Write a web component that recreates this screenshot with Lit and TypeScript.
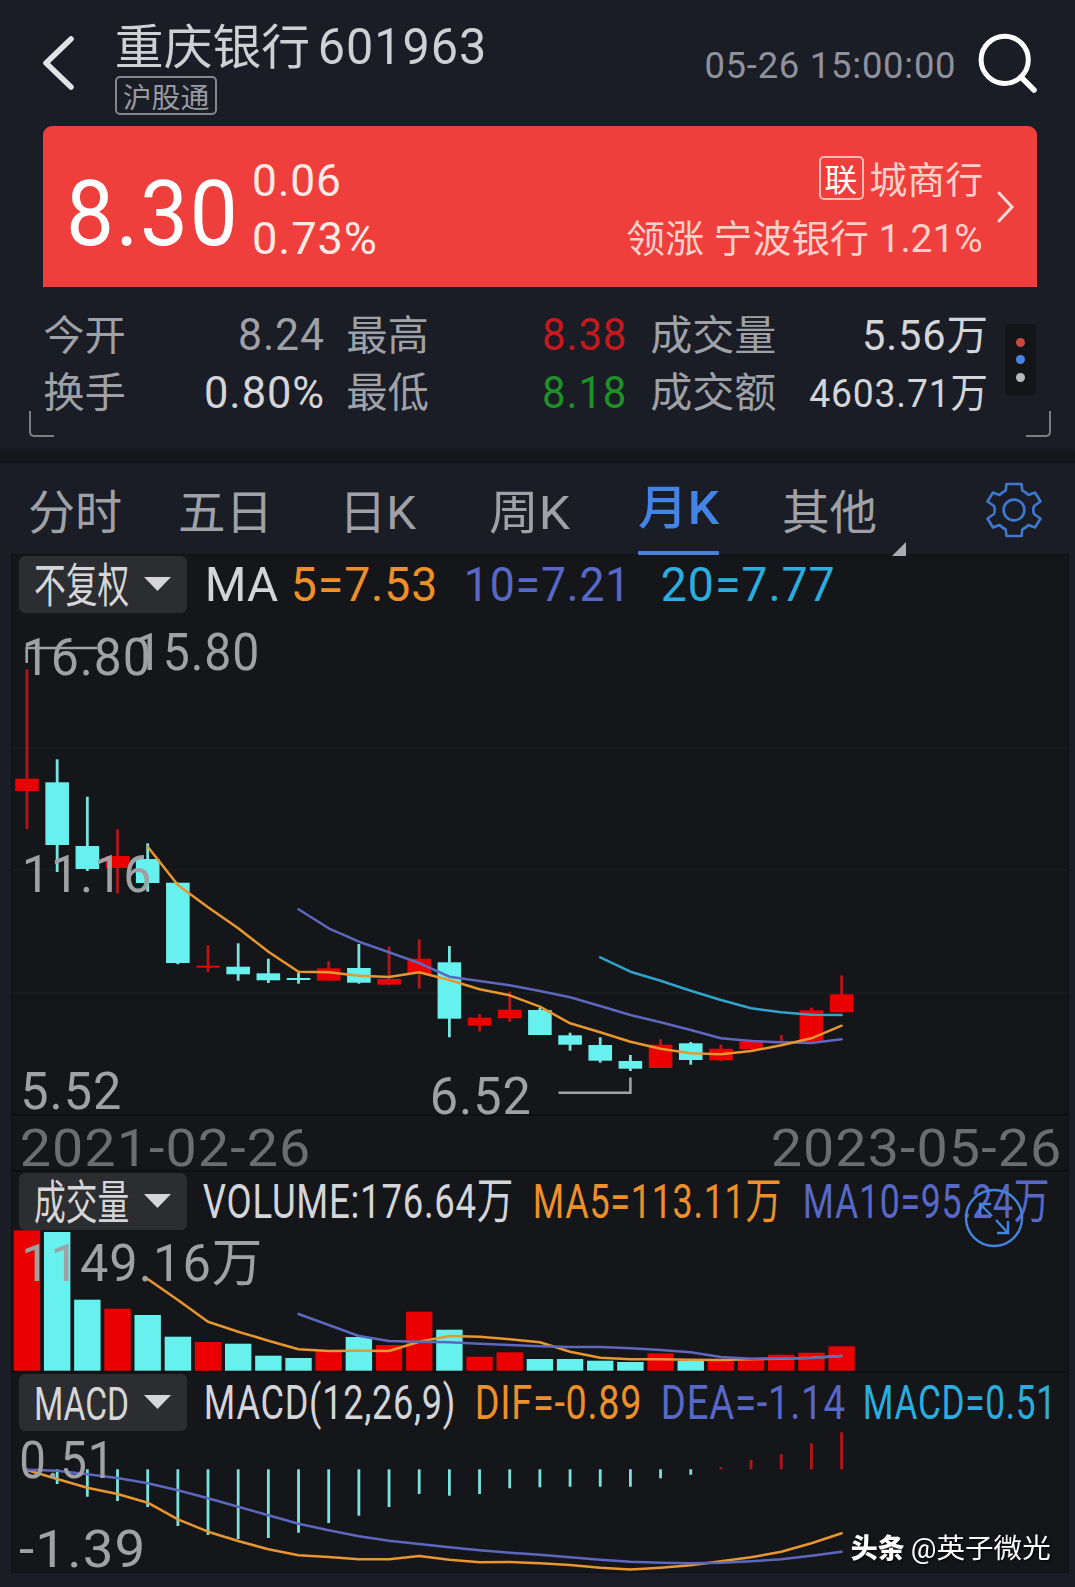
import { LitElement, html, svg, css } from "lit";
import { customElement, property } from "lit/decorators.js";

/** Extra tracking for strings that open with figures or Latin letters. */
const tracking = (text: string, size: number) => (/^[-0-9A-Z].*[0-9]/.test(text) ? size * 0.02 : 0);

/** Text squeezed to an exact width; the box is as tall as the capitals. */
@customElement("fit-text")
class FitText extends LitElement {
  @property() text = "";
  @property({ type: Number }) w = 100;
  @property({ type: Number }) size = 40;
  static styles = css`
    :host { display: block; flex: none; }
    svg { display: block; overflow: visible; }
    text { fill: currentColor; white-space: pre; }
  `;
  render() {
    const h = this.size * 0.727;
    const pad = this.size * 0.045;
    const ls = tracking(this.text, this.size);
    return html`<svg width=${this.w} height=${h}>
      <text x=${-pad} y=${h} font-size=${this.size} letter-spacing=${ls} textLength=${this.w + pad * 2 + ls}
        lengthAdjust="spacingAndGlyphs">${this.text}</text></svg>`;
  }
}

const fit = (text: string, w: number, size: number, cls = "") =>
  html`<fit-text class=${cls} .text=${text} .w=${w} .size=${size}></fit-text>`;

const STEP = 30.17;
const cx = (i: number) => 27 + i * STEP;

type Candle = [string, number, number, number, number];
const candles: Candle[] = [
  ["r", 669.3, 778.7, 791, 829], ["c", 759.3, 782.3, 845, 872], ["c", 796.7, 846, 869, 871],
  ["r", 829.3, 856, 868, 893.3], ["c", 843.3, 859, 883, 891.7], ["c", 882.7, 882.7, 963, 964.3],
  ["r", 945.3, 965.7, 967.7, 972.3], ["c", 943.3, 966.7, 974.3, 980.7], ["c", 958.7, 973.3, 980.3, 983],
  ["c", 972.7, 978, 980, 983.7], ["r", 961.3, 968.3, 980.7, 980.7], ["c", 944, 968, 982.7, 983.7],
  ["r", 946.7, 979, 984.7, 985], ["r", 939.3, 958.7, 974, 988.7], ["c", 946, 962.3, 1018.7, 1037.3],
  ["r", 1014, 1017.7, 1025.7, 1031.7], ["r", 991.7, 1009.7, 1018.3, 1022], ["c", 1007.7, 1010, 1035, 1035],
  ["c", 1032.7, 1035.3, 1044.7, 1050.7], ["c", 1037.3, 1045, 1060.7, 1062.7], ["c", 1055, 1061, 1068.7, 1071],
  ["r", 1039.3, 1044.7, 1068, 1068], ["c", 1042, 1043.3, 1060, 1064.7], ["r", 1044.7, 1048.7, 1060.3, 1061],
  ["r", 1039.5, 1041.3, 1049.3, 1049.3], ["r", 1035, 1041.3, 1043.3, 1043.3],
  ["r", 1007.7, 1010.3, 1042.7, 1042.7], ["r", 975.3, 994.3, 1012.3, 1012.3],
];
const ma5 = [846.7, 885, 907.3, 928.3, 951.7, 971.7, 972.3, 975.7, 977, 972.3, 980, 989.3, 995.3, 1006.7, 1023.3, 1032.3, 1041.7, 1048.7, 1053.3, 1054.3, 1051, 1045.3, 1038.3, 1025.7];
const ma10 = [909.3, 928.3, 941.7, 952.3, 963, 976.7, 981, 985.3, 991, 997.3, 1006, 1015, 1022.3, 1030, 1038.3, 1041, 1042.3, 1043, 1039.3];
const ma20 = [957.3, 971.7, 980.7, 990.7, 1000, 1008.3, 1012.3, 1014.7, 1015];
const volTops = [1230.3, 1232, 1299.7, 1308.7, 1315, 1336.7, 1342, 1343.7, 1355.7, 1358, 1351, 1337, 1345, 1311.7, 1329.7, 1356.7, 1352.3, 1359, 1359, 1360.7, 1362, 1353.3, 1361, 1360, 1357.7, 1354.7, 1352.7, 1346.3];
const vma5 = [1279, 1300, 1321.7, 1331.7, 1340.7, 1349.3, 1351, 1350.7, 1351, 1341.7, 1336, 1336.7, 1339.3, 1342.3, 1351.7, 1357.7, 1359.3, 1359.3, 1359.7, 1360, 1359.3, 1358.7, 1357.7, 1356];
const vma10 = [1314, 1325, 1336, 1341, 1341.7, 1342.3, 1343.7, 1345, 1346.3, 1347, 1347, 1348.3, 1350, 1352.3, 1357, 1358.7, 1358.3, 1358, 1356];
const ZERO = 1469.3;
const macd = [1469.3, 1484, 1496.7, 1501, 1507, 1526, 1535, 1539, 1538, 1532.7, 1523, 1515.7, 1507, 1494, 1495.7, 1494, 1488.3, 1487.3, 1486.7, 1486.7, 1486.7, 1478.3, 1474.7, 1467.3, 1460, 1454.3, 1443.3, 1432.3];
const dif = [1470, 1479, 1487.7, 1494, 1502.7, 1519.3, 1531.7, 1541, 1549.3, 1555.3, 1557, 1559.3, 1559.3, 1556, 1559.7, 1562.3, 1562, 1563.3, 1565, 1567.7, 1569.5, 1567.7, 1565.3, 1561.3, 1557.3, 1551.7, 1543.3, 1533.3];
const dea = [1469.7, 1470.7, 1474.3, 1478, 1483.3, 1490.3, 1498.3, 1506.7, 1515.3, 1523.7, 1530.3, 1536.3, 1540.7, 1544, 1547.3, 1550.3, 1552.7, 1554.7, 1557.3, 1559.7, 1561.7, 1562.7, 1563.3, 1562.7, 1561.3, 1559.3, 1555.7, 1551.7];

const line = (ys: number[], cls: string) => {
  const start = candles.length - ys.length;
  return svg`<polyline class="ln ${cls}" points=${ys.map((y, i) => `${cx(start + i).toFixed(1)},${y}`).join(" ")} />`;
};
const label = (t: string, x0: number, x1: number, y: number, size = 52.5, cls = "ax") => {
  const pad = size * 0.045;
  const ls = tracking(t, size);
  return svg`<text class=${cls} x=${x0 - pad} y=${y} font-size=${size} letter-spacing=${ls} textLength=${x1 - x0 + pad * 2 + ls}
    lengthAdjust="spacingAndGlyphs">${t}</text>`;
};

@customElement("app-root")
class AppRoot extends LitElement {
  static styles = css`
    :host {
      display: block; width: 1075px; height: 1587px; overflow: hidden;
      background: #1a1d26; color: #9fa1a7;
      font-family: Roboto, "Noto Sans CJK SC", sans-serif; font-weight: 400;
    }
    svg { display: block; flex: none; overflow: visible; }
    .grow { flex: 1; }
    .header { display: flex; align-items: flex-start; height: 126px; box-sizing: border-box; padding: 0 38px 0 42px; }
    .back { margin-top: 35px; }
    .name { padding: 28px 0 0 41px; }
    .name-row { display: flex; align-items: flex-end; gap: 12px; height: 36px; padding-left: 2px; color: #cfd0d4; }
    .tag {
      box-sizing: border-box; width: 102px; height: 39px; margin-top: 12px; padding: 10px 0 0 7px;
      border: 2px solid #85878e; border-radius: 5px; color: #989aa1;
    }
    .time { margin: 51.5px 24px 0 0; color: #8f929b; }
    .search { margin-top: 31px; }
    .quote {
      display: flex; align-items: flex-start; box-sizing: border-box; height: 161px; margin: 0 38px 0 43px;
      padding: 0 22px 0 27px; background: #ef3f3d; border-radius: 9px 9px 0 0; color: #fff;
    }
    .price { margin: 52.5px 20px 0 0; }
    .delta { display: flex; flex-direction: column; gap: 26px; padding-top: 38px; color: #ffe9e4; }
    .sector { display: flex; flex-direction: column; align-items: flex-end; color: #ffcfc9; }
    .sector-top { display: flex; align-items: flex-start; height: 97.5px; padding-top: 30px; box-sizing: border-box; gap: 7px; }
    .lian {
      box-sizing: border-box; width: 45px; height: 44px; border: 2px solid #ffbcb5; border-radius: 5px;
      padding: 9.5px 0 0 5.5px; color: #fff;
    }
    .sector-name { margin-top: 10.5px; }
    .go { margin: 64px 0 0 15px; }
    .stats { display: flex; height: 164px; box-sizing: border-box; position: relative; padding: 0 0 0 44.5px; }
    .grid { display: grid; grid-template-columns: 80px 197.5px 26px 80px 196.5px 27px 123px 211.5px; grid-template-rows: 31px 31px; row-gap: 26.7px; padding-top: 31.5px; align-items: end; }
    .num { justify-self: end; }
    .c4 { grid-column: 4; } .c7 { grid-column: 7; }
    .white { color: #d4d5d9; }
    .red { color: #c5191d; }
    .green { color: #1f8f27; }
    .more {
      display: flex; flex-direction: column; justify-content: center; align-items: center; gap: 8.5px;
      width: 31px; height: 71px; margin: 37px 0 0 18.5px; border-radius: 4px; background: #141518;
    }
    .dot { width: 9px; height: 9px; border-radius: 50%; }
    .d1 { background: #c8493e; } .d2 { background: #4683e2; } .d3 { background: #b8b8ba; }
    .corner { position: absolute; top: 124px; width: 23px; height: 24px; border-bottom: 2.5px solid #7d7f86; }
    .bl { left: 29px; border-left: 2.5px solid #7d7f86; border-bottom-left-radius: 5px; }
    .br { right: 24px; border-right: 2.5px solid #7d7f86; border-bottom-right-radius: 5px; }
    .band { height: 12px; background: #14161a; box-shadow: 0 0 3px #14161a; }
    .tabs { display: flex; align-items: flex-start; height: 92px; padding: 0 34px 0 29.5px; box-sizing: border-box; }
    .tab { margin-top: 31.5px; }
    .active { display: flex; flex-direction: column; align-items: center; width: 81px; height: 92.5px; margin-left: 69.5px; color: #4384e6; box-sizing: border-box; padding-top: 27px; font-weight: 500; }
    .underline { width: 81px; height: 4.5px; margin-top: 27px; background: #4a80d8; border-radius: 1px; }
    .t2 { margin-left: 60px; } .t3 { margin-left: 70px; } .t4 { margin-left: 77.5px; } .t6 { margin-left: 65.5px; }
    .tri { margin: 78.5px 0 0 16.5px; }
    .gear { margin-top: 17.5px; }
    .panel { width: 1056px; height: 1017px; margin-left: 12px; background: #15161a; box-shadow: 0 0 0 1px #111216; }
    .bar { display: flex; align-items: flex-start; height: 58px; padding-left: 7px; position: relative; }
    .drop {
      box-sizing: border-box; display: flex; align-items: flex-start; gap: 16.5px; width: 168px; height: 57px; margin-top: 0.5px;
      padding: 12px 0 0 17px; background: #2c2d31; border-radius: 6px; color: #d6d6d8;
    }
    .bar .arrow { margin-top: 9px; }
    .v { margin-top: 11px; }
    .o { color: #ee9029; } .p { color: #5868c6; } .b { color: #2aaddf; }
    .dates { display: flex; justify-content: space-between; box-sizing: border-box; height: 58px; padding: 11.5px 9px 0 9.5px; border-top: 2px solid #0f1013; border-bottom: 2px solid #0f1013; color: #6c6d71; }
    .ln { fill: none; stroke-width: 2.5; stroke-linejoin: round; stroke-linecap: round; }
    .lo { stroke: #e8962f; } .lp { stroke: #5c68bd; } .lb { stroke: #32a3cb; }
    .ax { fill: #a0a1a4; white-space: pre; }
    .r { fill: #ea0000; } .c { fill: #66f0ee; }
    .wr { stroke: #b3161a; } .wc { stroke: #79e3df; }
    .expand { position: absolute; right: 44px; top: 16px; }
    .wm { fill: #fff; filter: drop-shadow(1px 1px 1px #000); }
    .heavy { font-weight: 900; }
  `;

  private dropdown(text: string) {
    return html`<div class="drop">${fit(text, 91, 47)}
      <svg class="arrow" width="27" height="14"><path d="M0 0H27L13.5 14Z" fill="#d6d6d8" /></svg></div>`;
  }

  render() {
    const at = (text: string, w: number, gap: number, cls: string) =>
      html`<div style="width:${gap}px"></div>${fit(text, w, 48.5, "v " + cls)}`;
    return html`
      <header class="header">
        <svg class="back" width="32" height="56"><path d="M29 4L4 28L29 52" fill="none" stroke="#e0e2e6" stroke-width="5.5" stroke-linecap="round" stroke-linejoin="round" /></svg>
        <div class="name">
          <div class="name-row">${fit("重庆银行", 191, 48)}${fit("601963", 164, 50.5)}</div>
          <div class="tag">${fit("沪股通", 84, 28)}</div>
        </div>
        <div class="grow"></div>
        ${fit("05-26 15:00:00", 248, 36, "time")}
        <svg class="search" width="59" height="62" fill="none" stroke="#fff" stroke-linecap="round"><circle cx="26.7" cy="28.8" r="23.6" stroke-width="5" /><path d="M43 46L56 59" stroke-width="5.5" /></svg>
      </header>
      <section class="quote">
        ${fit("8.30", 163.5, 90.5, "price")}
        <div class="delta">${fit("0.06", 85, 44.5)}${fit("0.73%", 121, 44.5)}</div>
        <div class="grow"></div>
        <div class="sector">
          <div class="sector-top"><div class="lian">${fit("联", 30, 31)}</div>${fit("城商行", 110.5, 37, "sector-name")}</div>
          ${fit("领涨 宁波银行 1.21%", 353, 38)}
        </div>
        <svg class="go" width="19" height="34"><path d="M3 3L16 17L3 31" fill="none" stroke="#ffd8d3" stroke-width="3" stroke-linecap="round" /></svg>
      </section>
      <section class="stats">
        <div class="grid">
          ${fit("今开", 79, 41)}${fit("8.24", 82, 43.5, "num")}${fit("最高", 79, 41, "c4")}${fit("8.38", 80.5, 43.5, "num red")}${fit("成交量", 122.5, 41, "c7")}${fit("5.56万", 122, 42.5, "num white")}
          ${fit("换手", 79, 41)}${fit("0.80%", 116, 43.5, "num white")}${fit("最低", 79, 41, "c4")}${fit("8.18", 80.5, 43.5, "num green")}${fit("成交额", 122.5, 41, "c7")}${fit("4603.71万", 175, 39.5, "num white")}
        </div>
        <div class="more"><span class="dot d1"></span><span class="dot d2"></span><span class="dot d3"></span></div>
        <div class="corner bl"></div><div class="corner br"></div>
      </section>
      <div class="band"></div>
      <nav class="tabs">
        ${fit("分时", 90, 46.5, "tab")}${fit("五日", 91, 46.5, "tab t2")}${fit("日K", 73, 46.5, "tab t3")}${fit("周K", 77, 46.5, "tab t4")}
        <div class="active">${fit("月K", 77, 46.5)}<div class="underline"></div></div>
        ${fit("其他", 91, 46.5, "tab t6")}
        <svg class="tri" width="14" height="14" viewBox="0 0 14 14"><path d="M14 0V14H0Z" fill="#a9abb0" /></svg>
        <div class="grow"></div>
        <svg class="gear" width="54" height="58" viewBox="-27 -29 54 58" fill="none" stroke="#3d78d2" stroke-width="2.6" stroke-linejoin="round">
          <path d="M-7.5 -26H7.5L8.3 -19.5Q11.5 -18 14.5 -15L21 -17.5L26.5 -8.5L20 -4Q18.6 0 20 4L26.5 8.5L21 17.5L14.5 15Q11.5 18 8.3 19.5L7.5 26H-7.5L-8.3 19.5Q-11.5 18 -14.5 15L-21 17.5L-26.5 8.5L-20 4Q-18.6 0 -20 -4L-26.5 -8.5L-21 -17.5L-14.5 -15Q-11.5 -18 -8.3 -19.5Z" />
          <circle r="10.4" />
        </svg>
      </nav>
      <main class="panel">
        <div class="bar">${this.dropdown("不复权")}
          ${at("MA", 69, 20, "white")}${at("5=7.53", 142, 16.5, "o")}${at("10=7.21", 162, 31.5, "p")}${at("20=7.77", 169.5, 34.5, "b")}
        </div>
        <svg width="1056" height="501" viewBox="12 613 1056 501">
          ${[747.7, 870, 993].map((y) => svg`<path d="M12 ${y}H1068" stroke="#1a1b1f" stroke-width="2" />`)}
          ${candles.map(([k, hi, top, bot, lo], i) => svg`<path class="w${k}" stroke-width="2.8" d="M${cx(i)} ${hi}V${lo}" /><rect class=${k} x=${cx(i) - 11.8} y=${top} width="23.6" height=${bot - top} />`)}
          ${line(ma20, "lb")}${line(ma10, "lp")}${line(ma5, "lo")}
          <path d="M26.7 663V648H97M558.5 1092.7H630.4V1077.5" fill="none" stroke="#a0a1a4" stroke-width="2.6" />
          ${label("16.80", 24, 148.5, 674.5)}${label("15.80", 137, 257, 669.5)}${label("11.16", 24, 149, 891.5)}
          ${label("5.52", 22.5, 119, 1108.5)}${label("6.52", 432, 528.5, 1113.5)}
        </svg>
        <div class="dates">${fit("2021-02-26", 286, 52.5)}${fit("2023-05-26", 286, 52.5)}</div>
        <div class="bar">${this.dropdown("成交量")}
          ${at("VOLUME:176.64万", 306, 18, "white")}${at("MA5=113.11万", 244, 23.5, "o")}${at("MA10=95.24万", 242, 26, "p")}
          <svg class="expand" width="60" height="60" viewBox="-30 -30 60 60" fill="none" stroke="#4384de" stroke-width="2.4"><circle r="28" /><path d="M-2 -2L-14 -14M-14 -3V-14H-3M2 2L14 15M14 3V15H3" /></svg>
        </div>
        <svg width="1056" height="143" viewBox="12 1230 1056 143">
          ${volTops.map((y, i) => svg`<rect class=${candles[i][0]} x=${cx(i) - 13.2} y=${y} width="26.4" height=${1370.7 - y} />`)}
          <path d="M12 1372H1068" stroke="#0f1013" stroke-width="2" />
          ${label("1149.16万", 23.5, 260, 1281)}
          ${line(vma5, "lo")}${line(vma10, "lp")}
        </svg>
        <div class="bar">${this.dropdown("MACD")}
          ${at("MACD(12,26,9)", 247, 19, "white")}${at("DIF=-0.89", 162, 24, "o")}${at("DEA=-1.14", 179.5, 24, "p")}${at("MACD=0.51", 188.5, 22, "b")}
        </div>
        <svg width="1056" height="141" viewBox="12 1431 1056 141">
          ${macd.map((y, i) => svg`<path class=${y < ZERO ? "wr" : "wc"} stroke-width="2.8" d="M${cx(i)} ${ZERO}V${y}" />`)}
          ${line(dif, "lo")}${line(dea, "lp")}
          ${label("0.51", 21.5, 112, 1478)}${label("-1.39", 21.5, 143, 1566.5)}
          ${label("头条", 852, 903.5, 1557.5, 27, "wm heavy")}${label("@英子微光", 912, 1049.5, 1557.5, 27.5, "wm")}
        </svg>
      </main>`;
  }
}
